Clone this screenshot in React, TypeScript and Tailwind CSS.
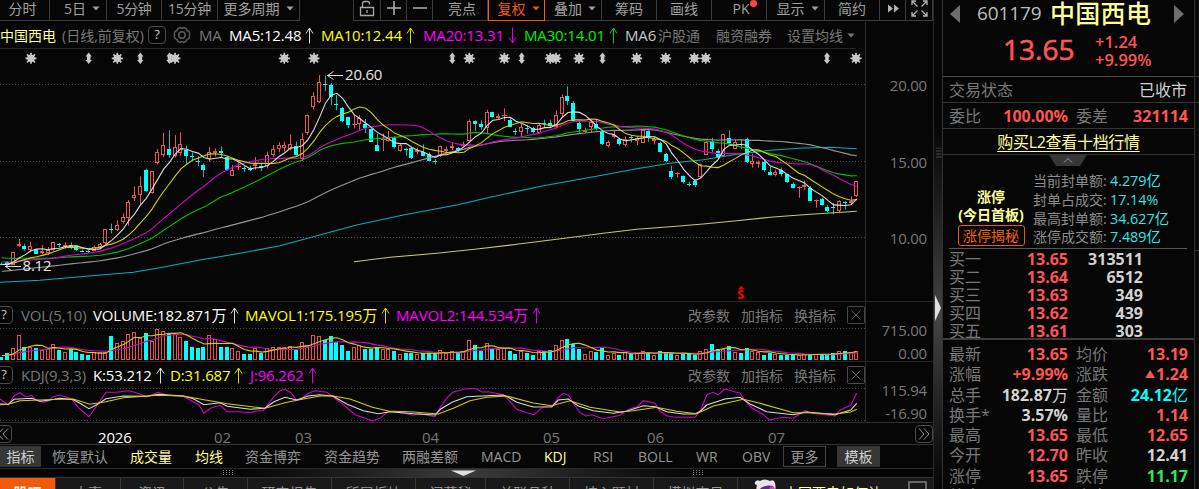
import type { ReactNode } from 'react';
import clsx from 'clsx';

// [high, bodyTop, bodyBottom, low, volumeTop, direction], in thirds of a pixel
type Candle = [number, number, number, number, number, 'u' | 'd'];

const STEP = 5.777;
const FIRST_X = 1.8;

const CANDLES: Candle[] = [
  [652, 656, 660, 660, 171, 'd'], [648, 652, 658, 660, 160, 'd'], [620, 622, 660, 660, 145, 'u'],
  [582, 597, 604, 606, 106, 'u'], [596, 604, 612, 617, 142, 'd'], [590, 603, 616, 622, 140, 'u'],
  [612, 612, 626, 626, 144, 'd'], [600, 618, 624, 628, 150, 'u'], [606, 614, 624, 630, 148, 'u'],
  [590, 592, 616, 617, 132, 'u'], [594, 598, 600, 608, 150, 'd'], [592, 600, 605, 610, 155, 'u'],
  [592, 600, 606, 612, 148, 'd'], [602, 603, 615, 618, 156, 'd'], [614, 618, 620, 621, 163, 'd'],
  [615, 618, 621, 624, 165, 'd'], [602, 605, 618, 618, 157, 'u'], [594, 598, 607, 609, 157, 'u'],
  [552, 553, 595, 597, 155, 'u'], [536, 552, 554, 565, 108, 'd'], [526, 541, 556, 558, 128, 'u'],
  [505, 517, 532, 536, 124, 'u'], [465, 470, 517, 542, 102, 'u'], [424, 451, 461, 468, 97, 'u'],
  [394, 424, 452, 480, 114, 'u'], [371, 374, 437, 440, 100, 'd'], [378, 379, 445, 446, 122, 'u'],
  [312, 320, 352, 358, 86, 'u'], [264, 301, 331, 336, 92, 'u'], [256, 312, 329, 338, 100, 'd'],
  [270, 307, 334, 338, 101, 'u'], [262, 297, 324, 332, 112, 'u'], [302, 314, 331, 356, 122, 'd'],
  [322, 332, 335, 346, 140, 'd'], [334, 348, 351, 364, 144, 'd'], [355, 360, 374, 396, 142, 'd'],
  [306, 322, 343, 350, 106, 'u'], [310, 317, 324, 334, 118, 'u'], [304, 318, 323, 336, 142, 'd'],
  [334, 336, 374, 377, 140, 'd'], [360, 374, 391, 392, 145, 'u'], [350, 362, 364, 375, 154, 'u'],
  [362, 370, 373, 380, 162, 'd'], [362, 371, 374, 378, 162, 'd'], [336, 358, 364, 374, 143, 'u'],
  [354, 363, 370, 378, 160, 'd'], [320, 331, 363, 370, 144, 'u'], [300, 313, 332, 336, 142, 'u'],
  [292, 301, 313, 322, 141, 'u'], [290, 301, 310, 320, 140, 'u'], [268, 297, 312, 316, 138, 'u'],
  [290, 302, 329, 332, 150, 'd'], [264, 283, 344, 348, 127, 'u'], [208, 209, 262, 270, 134, 'u'],
  [142, 153, 186, 194, 106, 'u'], [90, 112, 173, 174, 108, 'u'], [92, 118, 121, 138, 120, 'd'],
  [114, 120, 157, 180, 108, 'd'], [150, 177, 181, 196, 125, 'd'], [186, 190, 228, 231, 135, 'd'],
  [216, 217, 242, 250, 152, 'd'], [210, 236, 239, 250, 142, 'u'], [210, 220, 238, 254, 136, 'u'],
  [222, 238, 249, 264, 146, 'd'], [248, 251, 289, 291, 146, 'd'], [266, 300, 317, 317, 142, 'd'],
  [266, 281, 285, 318, 146, 'u'], [258, 275, 286, 290, 148, 'u'], [274, 277, 306, 310, 152, 'd'],
  [294, 300, 318, 320, 162, 'u'], [308, 312, 315, 332, 158, 'd'], [308, 310, 341, 342, 158, 'd'],
  [308, 316, 323, 328, 162, 'u'], [298, 320, 332, 334, 160, 'd'], [322, 327, 347, 348, 158, 'd'],
  [342, 347, 350, 358, 163, 'd'], [302, 304, 334, 336, 150, 'u'], [304, 313, 319, 326, 160, 'u'],
  [294, 302, 307, 316, 154, 'u'], [306, 309, 314, 322, 158, 'd'], [290, 296, 302, 306, 152, 'u'],
  [223, 227, 286, 288, 119, 'u'], [226, 228, 237, 258, 136, 'd'], [226, 238, 248, 254, 152, 'd'],
  [194, 201, 250, 268, 130, 'u'], [200, 202, 217, 218, 148, 'd'], [206, 214, 219, 222, 148, 'u'],
  [190, 209, 213, 228, 144, 'u'], [218, 224, 244, 246, 152, 'd'], [250, 258, 261, 270, 162, 'd'],
  [236, 247, 262, 276, 152, 'u'], [240, 248, 252, 266, 158, 'd'], [246, 250, 262, 266, 164, 'd'],
  [236, 240, 264, 266, 154, 'u'], [224, 235, 238, 248, 154, 'd'], [224, 234, 244, 250, 150, 'd'],
  [196, 209, 244, 250, 136, 'u'], [148, 156, 208, 216, 119, 'u'], [124, 152, 166, 180, 116, 'd'],
  [168, 175, 228, 230, 132, 'd'], [228, 234, 252, 264, 148, 'd'], [248, 254, 260, 264, 162, 'u'],
  [226, 232, 248, 264, 153, 'u'], [224, 236, 252, 256, 157, 'd'], [256, 258, 298, 300, 144, 'd'],
  [286, 292, 304, 308, 164, 'u'], [256, 270, 277, 280, 160, 'u'], [280, 282, 297, 302, 164, 'd'],
  [274, 282, 299, 304, 156, 'u'], [270, 277, 280, 292, 162, 'd'], [272, 280, 290, 300, 160, 'u'],
  [250, 254, 292, 294, 154, 'u'], [256, 257, 278, 290, 160, 'd'], [274, 283, 290, 298, 164, 'u'],
  [290, 294, 321, 322, 154, 'd'], [324, 326, 348, 350, 156, 'd'], [362, 378, 396, 402, 160, 'd'],
  [382, 384, 387, 398, 164, 'u'], [392, 394, 413, 416, 162, 'd'], [410, 417, 419, 424, 162, 'd'],
  [404, 408, 421, 426, 165, 'd'], [356, 358, 396, 398, 154, 'u'], [288, 290, 328, 330, 147, 'u'],
  [278, 288, 312, 322, 132, 'd'], [312, 318, 338, 340, 148, 'd'], [266, 268, 334, 336, 146, 'u'],
  [256, 279, 294, 298, 138, 'd'], [284, 290, 310, 312, 155, 'u'], [282, 296, 300, 312, 158, 'd'],
  [278, 282, 351, 354, 145, 'd'], [326, 348, 356, 368, 154, 'u'], [346, 350, 355, 368, 157, 'u'],
  [346, 350, 373, 380, 164, 'd'], [366, 380, 390, 392, 158, 'd'], [374, 382, 392, 394, 162, 'u'],
  [368, 374, 387, 394, 165, 'd'], [386, 388, 412, 414, 166, 'd'], [412, 416, 427, 430, 166, 'd'],
  [424, 426, 429, 458, 165, 'u'], [406, 421, 427, 434, 163, 'u'], [424, 428, 466, 468, 162, 'd'],
  [464, 466, 470, 488, 161, 'u'], [458, 461, 480, 482, 164, 'd'], [480, 485, 498, 502, 165, 'd'],
  [474, 487, 489, 508, 160, 'd'], [466, 469, 500, 502, 152, 'u'], [468, 470, 472, 494, 154, 'd'],
  [454, 469, 476, 480, 156, 'u'], [408, 409, 454, 456, 154, 'u'],
];

type Point = [number, number];

const MA120: Point[] = [
  [0, 712], [120, 706], [240, 695], [400, 682], [480, 668], [600, 645], [720, 625], [840, 602], [970, 567],
  [1070, 540], [1210, 510], [1370, 480], [1470, 457], [1630, 422], [1710, 408], [1810, 390], [1910, 371],
  [2010, 355], [2110, 344], [2210, 328], [2310, 316], [2410, 309], [2490, 307], [2570, 311],
];
const MA250: Point[] = [
  [1062, 650], [1170, 637], [1310, 625], [1430, 612], [1550, 598], [1670, 583], [1810, 565], [1910, 553],
  [2010, 545], [2110, 537], [2210, 527], [2310, 517], [2410, 509], [2570, 499],
];

const KDJ_J: Point[] = [
  [0, 297], [25, 315], [42, 287], [60, 278], [77, 291], [95, 286], [107, 301], [130, 307], [145, 303], [160, 290],
  [180, 285], [215, 297], [235, 322], [267, 350], [285, 325], [318, 277], [350, 277], [385, 272], [405, 277],
  [440, 291], [475, 277], [500, 285], [525, 288], [550, 289], [575, 303], [597, 315], [612, 340], [631, 325],
  [660, 316], [682, 335], [717, 335], [751, 338], [772, 332], [790, 332], [822, 290], [840, 272], [855, 268],
  [873, 278], [890, 301], [907, 294], [925, 280], [945, 272], [980, 277], [1000, 291], [1030, 314], [1065, 344],
  [1100, 356], [1117, 363], [1140, 355], [1165, 334], [1215, 340], [1238, 346], [1260, 341], [1305, 350],
  [1322, 320], [1340, 294], [1358, 277], [1395, 267], [1415, 265], [1430, 267], [1445, 276], [1465, 275],
  [1510, 284], [1530, 305], [1550, 328], [1580, 338], [1602, 344], [1630, 320], [1655, 322], [1675, 292],
  [1690, 280], [1705, 285], [1720, 310], [1740, 338], [1757, 348], [1775, 344], [1810, 356], [1860, 346],
  [1875, 334], [1895, 325], [1912, 320], [1930, 302], [1965, 310], [1980, 334], [2000, 347], [2025, 352],
  [2085, 352], [2102, 330], [2120, 285], [2138, 277], [2155, 284], [2175, 267], [2220, 280], [2235, 302],
  [2255, 323], [2290, 344], [2308, 360], [2350, 352], [2380, 355], [2415, 332], [2435, 340], [2505, 348],
  [2520, 330], [2552, 316], [2570, 280],
];
const KDJ_K: Point[] = [
  [0, 312], [25, 313], [42, 298], [95, 295], [120, 304], [150, 300], [180, 295], [220, 299], [240, 310], [267, 326],
  [290, 314], [318, 296], [370, 288], [440, 289], [475, 283], [550, 288], [580, 296], [612, 314], [660, 308],
  [682, 319], [751, 328], [795, 325], [822, 305], [855, 292], [890, 300], [925, 288], [960, 284], [1000, 289],
  [1040, 312], [1090, 332], [1135, 341], [1170, 335], [1240, 341], [1305, 345], [1322, 327], [1358, 306],
  [1400, 290], [1510, 285], [1525, 292], [1550, 307], [1600, 321], [1655, 320], [1675, 300], [1705, 297],
  [1735, 318], [1780, 332], [1840, 340], [1880, 334], [1930, 317], [1965, 320], [2000, 335], [2050, 342],
  [2085, 342], [2102, 333], [2120, 315], [2175, 297], [2220, 292], [2250, 312], [2300, 335], [2380, 344],
  [2420, 336], [2505, 344], [2552, 330], [2570, 310],
];
const KDJ_D: Point[] = [
  [0, 314], [25, 313], [60, 302], [180, 298], [220, 297], [270, 313], [318, 305], [370, 293], [475, 286], [550, 288],
  [612, 299], [682, 311], [795, 325], [855, 308], [890, 301], [960, 288], [1000, 288], [1050, 297], [1117, 322],
  [1165, 333], [1240, 336], [1315, 342], [1360, 325], [1410, 302], [1460, 292], [1520, 288], [1600, 309],
  [1655, 317], [1710, 302], [1770, 322], [1860, 336], [1900, 332], [1970, 322], [2030, 334], [2090, 341],
  [2140, 318], [2230, 298], [2280, 310], [2380, 338], [2430, 338], [2505, 342], [2552, 336], [2570, 328],
];

const candleX = (i: number) => FIRST_X + i * STEP;
const toPoints = (pts: Point[], top: number) => pts.map(([x, y]) => `${(x / 3).toFixed(1)},${(y / 3 + top).toFixed(1)}`).join(' ');

const closes = CANDLES.map(([, top, bottom, , , dir]) => (dir === 'u' ? top : bottom));
const volumes = CANDLES.map((c) => c[4]);

// Values from before the visible range, needed for the first moving averages
function history(values: [number, number][]) {
  return values.flatMap(([count, v]) => Array<number>(count).fill(v));
}
const closeHistory = history([[30, 723], [10, 612], [10, 640], [10, 658]]);
const volumeHistory = history([[60, 166]]);

function average(past: number[], values: number[], n: number, top: number) {
  const all = [...past, ...values];
  return values
    .map((_, i) => {
      const end = past.length + i + 1;
      const sum = all.slice(end - n, end).reduce((a, b) => a + b, 0);
      return `${candleX(i).toFixed(1)},${(sum / n / 3 + top).toFixed(1)}`;
    })
    .join(' ');
}

function Line({ points, color }: { points: string; color: string }) {
  return <polyline points={points} fill="none" stroke={color} strokeWidth="1.1" />;
}

function Dotted({ y, to = 866 }: { y: number; to?: number }) {
  return <line x1="0" x2={to} y1={y} y2={y} stroke="#484848" strokeDasharray="1 2" />;
}

const MARKERS: [number, 's' | 'a'][] = [
  [31, 's'], [88.7, 'a'], [117.3, 's'], [140.3, 'a'], [169.5, 'a'], [175, 's'], [284.3, 's'], [314, 's'],
  [452.3, 'a'], [469.3, 's'], [504.3, 's'], [521.7, 'a'], [550.3, 's'], [556, 's'], [579, 's'], [602.5, 'a'],
  [636.7, 's'], [665.7, 's'], [694.3, 's'], [705.7, 's'], [827, 'a'], [856, 's'],
];

function Marker({ x, kind }: { x: number; kind: 's' | 'a' }) {
  if (kind === 'a') {
    return <path d={`M${x} 52.5l3.2 4h-1.4v3.6h1.4l-3.2 4-3.2-4h1.4v-3.6h-1.4z`} fill="#c8c8c8" />;
  }
  return (
    <g transform={`translate(${x} 58.3)`} stroke="#c8c8c8" strokeWidth="1.7">
      <circle r="3" fill="#c8c8c8" />
      <path d="M-5.5 0H5.5M0-5.5V5.5M-4-4L4 4M-4 4L4-4" />
    </g>
  );
}

function PriceChart() {
  return (
    <svg width="866" height="252" viewBox="0 49 866 252" className="block">
      {MARKERS.map(([x, kind]) => <Marker key={x} x={x} kind={kind} />)}
      <Dotted y={84.5} />
      <Dotted y={161.5} />
      <Dotted y={237.5} />
      {CANDLES.map(([high, top, bottom, low, , dir], i) => {
        const x = Math.round(candleX(i) - 0.5);
        const y1 = Math.round(top / 3) + 45;
        const h = Math.max(1, Math.round((bottom - top) / 3));
        const hi = high / 3 + 45;
        const lo = low / 3 + 45;
        if (dir === 'd') {
          return (
            <g key={i} fill="#00ffff">
              <rect x={x} y={hi} width="1" height={lo - hi} opacity="0.75" />
              <rect x={x - 2} y={y1} width="4" height={h} />
            </g>
          );
        }
        return (
          <g key={i} fill="none" stroke="#ee5252">
            <path d={`M${x + 0.5} ${hi}V${y1}M${x + 0.5} ${y1 + h}V${lo}`} />
            {h > 1 ? <rect x={x - 1.5} y={y1 + 0.5} width="3" height={h - 1} /> : <path d={`M${x - 2} ${y1 + 0.5}h5`} />}
          </g>
        );
      })}
      <Line points={toPoints(MA250, 45)} color="#c8c86c" />
      <Line points={toPoints(MA120, 45)} color="#00b0c0" />
      <Line points={average(closeHistory, closes, 60, 45)} color="#969696" />
      <Line points={average(closeHistory, closes, 30, 45)} color="#00be00" />
      <Line points={average(closeHistory, closes, 20, 45)} color="#d200d2" />
      <Line points={average(closeHistory, closes, 10, 45)} color="#d2d200" />
      <Line points={average(closeHistory, closes, 5, 45)} color="#dcdcdc" />
      <path d="M327.500 75.500H343M327.500 75.500l6-4M327.500 75.500l6 4" fill="none" stroke="#e0e0e0" />
      <path d="M5.500 266.500H21M5.500 266.500l6-4M5.500 266.500l6 4" fill="none" stroke="#e0e0e0" />
      <g className="text-[15px] tracking-[-0.2px]" fill="#e6e6e6">
        <text x="345" y="80">20.60</text>
        <text x="22.500" y="270.500">8.12</text>
      </g>
      <path d="M738 289.500l3.200-3.700 3.200 3.700z" fill="#ff0000" />
      <text x="737" y="299" fill="#ff0000" className="text-[13px] font-bold">S</text>
    </svg>
  );
}

function VolumeChart() {
  return (
    <svg width="866" height="33" viewBox="0 328 866 33" className="block">
      <Dotted y={328.5} />
      {CANDLES.map(([, , , , vol, dir], i) => {
        const x = Math.round(candleX(i) - 0.5);
        const y = Math.round(vol / 3) + 300;
        return dir === 'd' ? (
          <rect key={i} x={x - 2} y={y} width="4" height={360 - y} fill="#00ffff" />
        ) : (
          <rect key={i} x={x - 1.5} y={y + 0.5} width="3" height={359 - y} fill="none" stroke="#e65050" />
        );
      })}
      <Line points={average(volumeHistory, volumes, 10, 300)} color="#d200d2" />
      <Line points={average(volumeHistory, volumes, 5, 300)} color="#d2d200" />
    </svg>
  );
}

function KdjChart() {
  return (
    <svg width="866" height="34" viewBox="0 388 866 34" className="block">
      <Dotted y={388.5} />
      <Dotted y={420.5} />
      <Line points={toPoints(KDJ_J, 300)} color="#d200d2" />
      <Line points={toPoints(KDJ_K, 300)} color="#dcdcdc" />
      <Line points={toPoints(KDJ_D, 300)} color="#d2d200" />
    </svg>
  );
}

function Arrow({ down }: { down?: boolean }) {
  return (
    <svg width="9" height="17" viewBox="0 0 9 17" fill="none" stroke="currentColor" className={clsx('shrink-0 opacity-85', down && 'rotate-180')}>
      <path d="M4.500 1V16.500M1 6.500L4.500 1L8 6.500" />
    </svg>
  );
}

function Caret() {
  return (
    <svg width="8" height="5" viewBox="0 0 8 5" fill="currentColor" className="shrink-0">
      <path d="M0.500 0.500h7L4 4.500z" />
    </svg>
  );
}

function HelpBox() {
  return (
    <span className="flex h-[18px] w-[18px] shrink-0 items-center justify-center rounded-sm border border-[#4a4a4a] text-[13px] text-[#c8c8c8]">?</span>
  );
}

function ToolButton({ w, active, children }: { w: string; active?: boolean; children?: ReactNode }) {
  return (
    <div
      className={clsx(
        'flex h-[21px] shrink-0 items-center justify-center gap-1.5 border-r border-b pb-1',
        w,
        active ? 'border-l border-[#f05a0a] text-[#f05a0a]' : 'border-[#3c3c3c] text-[#a0a0a0]',
      )}
    >
      {children}
    </div>
  );
}

function Toolbar() {
  return (
    <div className="flex h-[22px] shrink-0 text-[14px]">
      <ToolButton w="w-[50px] pr-1">分时</ToolButton>
      <ToolButton w="w-[57px] pl-2">5日<Caret /></ToolButton>
      <ToolButton w="w-[55px] tracking-[-0.3px]">5分钟</ToolButton>
      <ToolButton w="w-[56px] tracking-[-0.2px]">15分钟</ToolButton>
      <ToolButton w="w-[82px]">更多周期<Caret /></ToolButton>
      <div className="h-[21px] w-[54px] shrink-0 border-r border-[#3c3c3c]" />
      <ToolButton w="w-[27px]">
        <svg width="16" height="17" viewBox="0 0 16 17" fill="none" stroke="#a8a8a8" strokeWidth="1.300" className="shrink-0">
          <path d="M1.500 7.500h13v8h-13zM3.500 7.500V3.500q0-2 2-2h3q2 0 2 2v1M8 10v3" />
        </svg>
      </ToolButton>
      <ToolButton w="w-[26px]">
        <svg width="14" height="14" viewBox="0 0 14 14" stroke="#b4b4b4" strokeWidth="1.5"><path d="M0 7H14M7 0V14" /></svg>
      </ToolButton>
      <ToolButton w="w-[26px]">
        <svg width="14" height="14" viewBox="0 0 14 14" stroke="#b4b4b4" strokeWidth="1.5"><path d="M0 7H14" /></svg>
      </ToolButton>
      <ToolButton w="w-[55px] pl-1">亮点</ToolButton>
      <ToolButton w="w-[57px] pl-1" active>复权<Caret /></ToolButton>
      <ToolButton w="w-[57px] pl-1">叠加<Caret /></ToolButton>
      <ToolButton w="w-[55px]">筹码</ToolButton>
      <ToolButton w="w-[55px]">画线</ToolButton>
      <ToolButton w="w-[55px] pl-1">
        <span className="relative">
          PK
          <span className="absolute top-[2px] -right-[7px] h-[7px] w-[7px] rounded-full bg-[#ff4646]" />
        </span>
      </ToolButton>
      <ToolButton w="w-[58px] pl-1">显示<Caret /></ToolButton>
      <ToolButton w="w-[55px]">简约</ToolButton>
      <ToolButton w="w-[26px]">
        <svg width="12" height="9" viewBox="0 0 12 9" fill="#b4b4b4"><path d="M1 0.500L6 4.500L1 8.500zM7 0.500L12 4.500L7 8.500z" /></svg>
      </ToolButton>
      <ToolButton w="w-[27px]">
        <svg width="17" height="17" viewBox="0 0 17 17" fill="none" stroke="#b4b4b4" strokeWidth="1.300" className="shrink-0">
          <path d="M1 5V1H5M1 1L6.500 6.500M12 1H16V5M16 1L10.500 6.500M1 12V16H5M1 16L6.500 10.500M16 12V16H12M16 16L10.500 10.500" />
        </svg>
      </ToolButton>
    </div>
  );
}

function MaLegend() {
  return (
    <div className="flex h-[27px] w-[856px] items-center overflow-hidden border-b border-[#242424] text-[15px] whitespace-nowrap tracking-[-0.15px]">
      <span className="w-[62px] shrink-0 text-[14px] tracking-normal text-[#ffff9c]">中国西电</span>
      <span className="w-[86px] shrink-0 text-[14px] tracking-normal text-[#787878]">(日线,前复权)</span>
      <HelpBox />
      <svg width="18" height="18" viewBox="0 0 18 18" fill="none" stroke="#5a5a5a" strokeWidth="1.500" className="mr-2 ml-[7px] shrink-0">
        <path d="M5 2.500L7 1.500Q9 2.800 11 1.500L13 2.500Q13.500 5 16 5.500Q17 7 16.500 9Q17 11 16 12.500Q13.500 13 13 15.500L11 16.500Q9 15.200 7 16.500L5 15.500Q4.500 13 2 12.500Q1 11 1.500 9Q1 7 2 5.500Q4.500 5 5 2.500Z" />
        <circle cx="9" cy="9" r="3.200" />
      </svg>
      <span className="w-[30px] shrink-0 text-[#787878]">MA</span>
      <span className="flex w-[92px] shrink-0 items-center justify-between pr-[7px] text-white">MA5:12.48<Arrow /></span>
      <span className="flex w-[102px] shrink-0 items-center justify-between pr-[8px] text-[#ffff00]">MA10:12.44<Arrow /></span>
      <span className="flex w-[101px] shrink-0 items-center justify-between pr-[7px] text-[#ff00ff]">MA20:13.31<Arrow down /></span>
      <span className="flex w-[101px] shrink-0 items-center justify-between pr-[7px] text-[#00f000]">MA30:14.01<Arrow /></span>
      <span className="w-[33px] shrink-0 overflow-hidden text-[#c8c8c8]">MA6</span>
      <span className="flex shrink-0 items-center text-[14px] tracking-normal text-[#787878]">
        <span className="w-[58px]">沪股通</span>
        <span className="w-[71px]">融资融券</span>
        <span className="mr-1">设置均线</span>
        <Caret />
      </span>
    </div>
  );
}

function PanelActions() {
  return (
    <div className="ml-auto flex items-center text-[14px] tracking-normal text-[#787878]">
      <span className="mr-[11px]">改参数</span>
      <span className="mr-[11px]">加指标</span>
      <span className="mr-[11px]">换指标</span>
      <svg width="18" height="18" viewBox="0 0 18 18" fill="none" stroke="#5f5f5f">
        <rect x="0.500" y="0.500" width="17" height="17" rx="1" stroke="#4a4a4a" />
        <path d="M4.500 4.500l9 9M13.500 4.500l-9 9" />
      </svg>
    </div>
  );
}

function PanelHeader({ title, children }: { title: string; children: ReactNode }) {
  return (
    <div className="flex h-[26px] items-center text-[15px] whitespace-nowrap tracking-[-0.15px]">
      <span className="-ml-[5px] mr-2"><HelpBox /></span>
      <span className="w-[72px] shrink-0 text-[#787878]">{title}</span>
      {children}
      <PanelActions />
    </div>
  );
}

function AxisLabel({ mt, children }: { mt: string; children: string }) {
  return <div className={clsx('h-5 leading-5', mt)}>{children}</div>;
}

const MONTHS: [string, string][] = [
  ['2026', 'w-[116px] text-white'], ['02', 'w-[81px]'], ['03', 'w-[127px]'], ['04', 'w-[121px]'],
  ['05', 'w-[104px]'], ['06', 'w-[121px]'], ['07', 'w-[145px]'],
];

const INDICATORS: [string, string][] = [
  ['恢复默认', 'w-[78px]'], ['成交量', 'w-[65px] text-[#ffff9c]'], ['均线', 'w-[50px] text-[#ffff9c]'],
  ['资金博弈', 'w-[79px]'], ['资金趋势', 'w-[78px]'], ['两融差额', 'w-[79px]'], ['MACD', 'w-[63px]'],
  ['KDJ', 'w-[49px] text-[#ffff9c]'], ['RSI', 'w-[45px]'], ['BOLL', 'w-[58px]'], ['WR', 'w-[46px]'], ['OBV', 'w-[41px]'],
];

const TABS: [string, string][] = [
  ['股吧', 'w-[56px]'], ['大事', 'w-[65px]'], ['资讯', 'w-[63px]'], ['公告', 'w-[64px]'], ['研究报告', 'w-[84px]'],
  ['所属板块', 'w-[84px]'], ['问董秘', 'w-[70px]'], ['关联品种', 'w-[84px]'], ['核心题材', 'w-[84px]'], ['模拟交易', 'w-[84px]'],
];

function Grip() {
  return (
    <svg width="11" height="6" viewBox="0 0 11 6" fill="#808080">
      {[0, 3, 6, 9].map((x) => [0, 2, 4].map((y) => <rect key={`${x}-${y}`} x={x} y={y} width="1" height="1" />))}
    </svg>
  );
}

function ChartArea() {
  return (
    <div className="flex w-[934px] shrink-0 flex-col border-r border-[#2a2a2a]">
      <Toolbar />
      <div className="flex h-[280px] shrink-0 border-b border-[#262626]">
        <div className="w-[866px] shrink-0 border-r border-[#2d2d2d]">
          <MaLegend />
          <PriceChart />
        </div>
        <div className="w-[61px] text-right text-[15px] tracking-[-0.2px] text-[#787878]">
          <AxisLabel mt="mt-[53px]">20.00</AxisLabel>
          <AxisLabel mt="mt-[57px]">15.00</AxisLabel>
          <AxisLabel mt="mt-[56px]">10.00</AxisLabel>
        </div>
      </div>
      <div className="flex h-[60px] shrink-0 border-b border-[#262626]">
        <div className="w-[866px] shrink-0 border-r border-[#2d2d2d]">
          <PanelHeader title="VOL(5,10)">
            <span className="flex w-[152px] shrink-0 items-center gap-1 text-white">VOLUME:182.871万<Arrow /></span>
            <span className="flex w-[151px] shrink-0 items-center gap-1 text-[#ffff00]">MAVOL1:175.195万<Arrow /></span>
            <span className="flex items-center gap-1 text-[#ff00ff]">MAVOL2:144.534万<Arrow /></span>
          </PanelHeader>
          <VolumeChart />
        </div>
        <div className="w-[61px] text-right text-[15px] tracking-[-0.2px] text-[#787878]">
          <AxisLabel mt="mt-[18px]">715.00</AxisLabel>
          <AxisLabel mt="mt-[3px]">0.00</AxisLabel>
        </div>
      </div>
      <div className="flex h-[61px] shrink-0 border-b border-[#2d2d2d]">
        <div className="w-[866px] shrink-0 border-r border-[#2d2d2d]">
          <PanelHeader title="KDJ(9,3,3)">
            <span className="flex w-[77px] shrink-0 items-center gap-1 text-white">K:53.212<Arrow /></span>
            <span className="flex w-[80px] shrink-0 items-center gap-1 text-[#ffff00]">D:31.687<Arrow /></span>
            <span className="flex items-center gap-1 text-[#ff00ff]">J:96.262<Arrow /></span>
          </PanelHeader>
          <KdjChart />
        </div>
        <div className="w-[61px] text-right text-[15px] tracking-[-0.2px] text-[#787878]">
          <AxisLabel mt="mt-[18px]">115.94</AxisLabel>
          <AxisLabel mt="mt-[3px]">-16.90</AxisLabel>
        </div>
      </div>
      <div className="flex h-[22px] shrink-0 items-center border-b border-[#333] text-[15px] tracking-[-0.2px] text-[#787878]">
        <span className="-ml-1.5 mr-[86px] flex h-[18px] w-[18px] shrink-0 items-center justify-center rounded-sm border border-[#4a4a4a]">
          <svg width="12" height="12" viewBox="0 0 12 12" fill="none" stroke="#909090"><path d="M6 0.500L1 6l5 5.500M11 0.500L6 6l5 5.500" /></svg>
        </span>
        {MONTHS.map(([label, cls]) => <span key={label} className={clsx('shrink-0 pt-1.5 leading-4', cls)}>{label}</span>)}
        <span className="ml-auto flex h-[18px] w-[18px] shrink-0 items-center justify-center rounded-sm border border-[#4a4a4a]">
          <svg width="12" height="12" viewBox="0 0 12 12" fill="none" stroke="#909090"><path d="M1 0.500L6 6l-5 5.500M6 0.500L11 6l-5 5.500" /></svg>
        </span>
      </div>
      <div className="flex h-6 shrink-0 items-center border-b border-[#2a2a2a] text-[14px] whitespace-nowrap text-[#969696]">
        <span className="mr-[11px] flex h-[21px] w-[41px] items-center justify-center bg-[#373737] text-[#d0d0d0]">指标</span>
        {INDICATORS.map(([label, cls]) => (
          <span key={label} className={clsx('shrink-0', cls)}>{label}</span>
        ))}
        <span className="mr-[11px] flex h-[21px] w-[43px] items-center justify-center border border-[#444]">更多</span>
        <span className="flex h-[21px] w-[43px] items-center justify-center bg-[#373737] text-[#d0d0d0]">模板</span>
      </div>
      <div className="flex h-2 shrink-0 items-center bg-gradient-to-r from-[#050505] from-25% via-[#3c3c3c] via-50% to-[#050505] to-75%">
        <span className="ml-[223px]"><Grip /></span>
        <svg width="25" height="6" viewBox="0 0 25 6" className="ml-[217px]"><path d="M0 0.500h25L12.500 6z" fill="#e0e0e0" /></svg>
        <span className="ml-[217px]"><Grip /></span>
      </div>
      <div className="flex h-[28px] shrink-0 border-t border-[#333] bg-[#191919] text-[14px] whitespace-nowrap text-[#969696]">
        {TABS.map(([label, cls], i) => (
          <span
            key={label}
            className={clsx('flex shrink-0 items-center justify-center border-r border-[#3a3a3a] pt-0.5', cls, i === 0 && 'bg-[#f05a0a] font-bold text-white')}
          >
            {label}
          </span>
        ))}
        <svg width="24" height="24" viewBox="0 0 24 24" className="mt-[1px] ml-[15px] shrink-0">
          <path d="M2 3Q4 0 7 2Q12-1 17 2Q21 0 22 4Q23 8 22 14Q16 22 6 18Q2 12 4 6Q1 6 2 3Z" fill="#e6e6ea" />
          <path d="M6 11Q11 5 20 7Q23 11 21 16H8Q5 14 6 11Z" fill="#5b2d90" />
          <circle cx="19" cy="10" r="2.500" fill="#d84aa0" />
        </svg>
        <span className="ml-[7px] flex items-center pt-0.5 text-[#ffff9c]">中国西电如何让</span>
        <span className="mt-[3px] mr-[6px] ml-auto h-[18px] w-[19px] border-2 border-[#666]" />
      </div>
    </div>
  );
}

function Value({ children, color, w }: { children: ReactNode; color: string; w: string }) {
  return <span className={clsx('shrink-0 text-right font-bold', w, color)}>{children}</span>;
}

const RED = 'text-[#ff5454]';
const GREY = 'text-[#d2d2d2]';

const BIDS = [
  ['买一', '13.65', '313511'],
  ['买二', '13.64', '6512'],
  ['买三', '13.63', '349'],
  ['买四', '13.62', '439'],
  ['买五', '13.61', '303'],
];

const STATS: [string, ReactNode, string, string, ReactNode, string][] = [
  ['最新', '13.65', RED, '均价', '13.19', RED],
  ['涨幅', '+9.99%', RED, '涨跌', <><span className="mr-px inline-block align-[2px] text-[10px]">▲</span>1.24</>, RED],
  ['总手', <>182.87<span className="font-normal">万</span></>, GREY, '金额', <>24.12<span className="font-normal">亿</span></>, 'text-[#00ffff]'],
  ['换手*', '3.57%', GREY, '量比', '1.14', RED],
  ['最高', '13.65', RED, '最低', '12.65', RED],
  ['今开', '12.70', RED, '昨收', '12.41', GREY],
  ['涨停', '13.65', RED, '跌停', '11.17', 'text-[#2ee65a]'],
  ['外盘', '', RED, '内盘', '', RED],
];

const LIMIT_UP = [
  ['当前封单额:', '4.279亿'],
  ['封单占成交:', '17.14%'],
  ['最高封单额:', '34.627亿'],
  ['涨停成交额:', '7.489亿'],
];

function QuotePanel() {
  return (
    <div className="flex w-[253px] shrink-0 flex-col border-x border-[#333] text-[16px] leading-none whitespace-nowrap text-[#787878]">
      <div className="h-[77px] shrink-0 border-b border-[#4a4a4a]">
        <div className="flex h-[27px] items-center">
          <svg width="10" height="18" viewBox="0 0 10 18" className="ml-[7px]"><path d="M10 0V18L0 9z" fill="#6e6e6e" /></svg>
          <span className="ml-[17px] w-[73px] text-[19px] tracking-[-0.1px] text-[#bebebe]">601179</span>
          <span className="text-[25px] font-medium tracking-[0.3px] text-[#ffff9c]">中国西电</span>
          <svg width="10" height="18" viewBox="0 0 10 18" className="mr-2.5 ml-auto"><path d="M0 0V18L10 9z" fill="#6e6e6e" /></svg>
        </div>
        <div className="flex h-[46px] items-center">
          <span className="ml-[60px] w-[92px] pb-[3px] text-[28px] text-[#ff5454] [-webkit-text-stroke:0.6px_#ff5454]">13.65</span>
          <div className="flex flex-col pt-0.5 text-[16.500px] leading-[18px] font-semibold text-[#ff5454]">
            <span>+1.24</span>
            <span>+9.99%</span>
          </div>
        </div>
      </div>
      <div className="flex h-[26px] shrink-0 items-center justify-between border-b border-[#333] pr-[7px] pl-[6px]">
        <span>交易状态</span>
        <span className={GREY}>已收市</span>
      </div>
      <div className="flex h-[26px] shrink-0 items-center border-b border-[#333] pl-[6px]">
        <span className="w-[40px]">委比</span>
        <Value w="w-[79px]" color={RED}>100.00%</Value>
        <span className="ml-2 w-[40px]">委差</span>
        <Value w="w-[72px]" color={RED}>321114</Value>
      </div>
      <div className="flex h-[26px] shrink-0 items-center justify-center border-b border-[#333] text-[#ffff9c]">
        <span className="tracking-[-0.3px] underline decoration-1 underline-offset-[3px]">购买L2查看十档行情</span>
      </div>
      <svg width="38" height="11" viewBox="0 0 38 11" fill="none" className="ml-[106px] shrink-0">
        <path d="M0 0H38L31 11H7z" fill="#373737" />
        <path d="M15 7.500L19 3.500L23 7.500" stroke="#a0a0a0" />
      </svg>
      <div className="mr-[7px] ml-[6px] flex h-[83px] shrink-0 border-b border-[#555]">
        <div className="flex w-[84px] flex-col items-center pt-[24px] text-[14px] font-bold text-[#ffff9c]">
          <span className="h-[18px]">涨停</span>
          <span className="h-[17px]">(今日首板)</span>
          <span className="flex h-[21px] w-[67px] shrink-0 items-center justify-center rounded-[3px] border border-[#e65a14] font-normal text-[#f0640f]">涨停揭秘</span>
        </div>
        <div className="flex flex-col pt-[6px] text-[14px]">
          {LIMIT_UP.map(([label, value]) => (
            <div key={label} className="flex h-[18.700px] items-center">
              <span className="w-[77px] text-[#8c8c8c]">{label}</span>
              <span className="text-[14.300px] text-[#2ee6e6]">{value}</span>
            </div>
          ))}
        </div>
      </div>
      <div className="flex h-[91px] shrink-0 flex-col border-b-2 border-[#3c3c3c] pt-px">
        {BIDS.map(([label, price, qty]) => (
          <div key={label} className="flex h-[18px] shrink-0 items-center pl-[6px]">
            <span className="w-[40px]">{label}</span>
            <Value w="w-[79px]" color={RED}>{price}</Value>
            <Value w="w-[75px]" color={GREY}>{qty}</Value>
          </div>
        ))}
      </div>
      <div className="pt-1">
        {STATS.map(([l1, v1, c1, l2, v2, c2]) => (
          <div key={l1} className="flex h-[20.250px] items-center pl-[6px]">
            <span className="w-[42px]">{l1}</span>
            <Value w="w-[77px]" color={c1}>{v1}</Value>
            <span className="ml-2 w-[40px]">{l2}</span>
            <Value w="w-[72px]" color={c2}>{v2}</Value>
          </div>
        ))}
      </div>
    </div>
  );
}

export default function App() {
  return (
    <div className="flex h-[489px] w-[1199px] overflow-hidden bg-[#060606] font-['Open_Sans','Noto_Sans_CJK_SC',sans-serif]">
      <ChartArea />
      <div className="flex w-[8px] shrink-0 flex-col items-center bg-gradient-to-b from-[#060606] from-25% via-[#444] via-65% to-[#060606]">
        <span className="mt-[150px] rotate-90"><Grip /></span>
        <svg width="6" height="26" viewBox="0 0 6 26" className="mt-[139px] shrink-0"><path d="M0 0L6 13L0 26z" fill="#e0e0e0" /></svg>
      </div>
      <QuotePanel />
      <div className="flex-1 bg-[#0a0a0a]">
        <div className="h-[77px] border-b border-[#333]" />
        <div className="h-[26px] border-b border-[#333]" />
        <div className="h-[148px] border-b border-[#333]" />
      </div>
    </div>
  );
}
